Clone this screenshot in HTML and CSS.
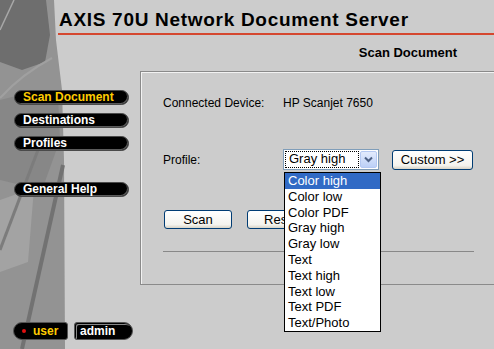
FILE: index.html
```html
<!DOCTYPE html>
<html lang="en">
<head>
    <meta charset="UTF-8">
    <title>AXIS 70U - Scan Document</title>
    <link rel="stylesheet" href="styles.css">
</head>
<body>
    <div class="page">
        <header class="masthead">
            <h1 class="title">AXIS 70U Network Document Server</h1>
            <div class="page-name">Scan Document</div>
        </header>

        <div class="layout">
            <nav class="sidebar">
                <ul class="menu">
                    <li><a class="menu-item active" href="#">Scan Document</a></li>
                    <li><a class="menu-item" href="#">Destinations</a></li>
                    <li><a class="menu-item" href="#">Profiles</a></li>
                </ul>
                <ul class="menu menu-help">
                    <li><a class="menu-item" href="#">General Help</a></li>
                </ul>
                <div class="modes">
                    <a class="mode mode-user" href="#"><span class="dot"></span>user</a>
                    <a class="mode mode-admin" href="#">admin</a>
                </div>
            </nav>

            <main class="panel">
                <div class="row device-row">
                    <span class="label">Connected Device:</span>
                    <span class="value">HP Scanjet 7650</span>
                </div>

                <div class="row profile-row">
                    <span class="label">Profile:</span>
                    <div class="select">
                        <span class="select-value">Gray high</span>
                        <span class="select-arrow">
                            <svg width="9" height="7" viewBox="0 0 9 7"><path d="M1 1.5 L4.5 5 L8 1.5" stroke="#4d6185" stroke-width="2" fill="none"/></svg>
                        </span>
                        <ul class="select-options">
                            <li class="selected">Color high</li>
                            <li>Color low</li>
                            <li>Color PDF</li>
                            <li>Gray high</li>
                            <li>Gray low</li>
                            <li>Text</li>
                            <li>Text high</li>
                            <li>Text low</li>
                            <li>Text PDF</li>
                            <li>Text/Photo</li>
                        </ul>
                    </div>
                    <button class="button custom-button">Custom &gt;&gt;</button>
                </div>

                <div class="row action-row">
                    <button class="button">Scan</button>
                    <button class="button">Reset</button>
                </div>

                <hr class="divider">
            </main>
        </div>
    </div>
</body>
</html>
```

FILE: styles.css
```css
html {
    overflow: hidden;
}
body {
    margin: 0;
    background-color: #cccccc;
    font-family: "Liberation Sans", Arial, sans-serif;
    color: #000;
}
.page {
    height: 349px;
    background-repeat: no-repeat;
    background-position: left top;
    background-image: url("data:image/svg+xml,%3Csvg xmlns='http://www.w3.org/2000/svg' width='66' height='349' viewBox='0 0 66 349'%3E%3Cpolygon points='0,0 54,0 56,40 62,90 64,160 65,349 0,349' fill='%23939393'/%3E%3Cpolygon points='0,0 46,0 50,35 45,62 22,70 0,62' fill='%236e6e6e'/%3E%3Cpolygon points='0,100 40,90 58,96 60,140 42,190 0,180' fill='%23878787'/%3E%3Cpolygon points='0,200 34,188 28,262 0,272' fill='%23a3a3a3'/%3E%3Cpath d='M14,0 L0,30' stroke='%23a8a8a8' stroke-width='1.5'/%3E%3Cpath d='M0,98 Q22,74 52,58' stroke='%23a0a0a0' stroke-width='2' fill='none'/%3E%3Cpath d='M63,165 L22,349' stroke='%23727272' stroke-width='4'/%3E%3Cpath d='M38,150 L0,250' stroke='%237c7c7c' stroke-width='3'/%3E%3C/svg%3E");
}

/* header */
.title {
    margin: 0 0 0 58px;
    padding: 9px 0 2px 1px;
    font-size: 19px;
    line-height: 22px;
    letter-spacing: 0.7px;
    font-weight: bold;
    white-space: nowrap;
    border-bottom: 2px solid #d5472f;
}
.page-name {
    margin-top: 10px;
    padding-right: 37px;
    text-align: right;
    font-size: 13px;
    line-height: 16px;
    font-weight: bold;
}

.layout {
    display: grid;
    grid-template-columns: 140px 357px;
    align-items: start;
    margin-top: 10px;
}

/* left menu */
.sidebar {
    padding: 19px 0 0 14px;
}
.menu {
    list-style: none;
    margin: 0;
    padding: 0;
}
.menu-help {
    margin-top: 31px;
}
.menu-item {
    display: block;
    width: 115px;
    height: 15px;
    box-sizing: border-box;
    margin-bottom: 8px;
    padding-left: 8px;
    border: 1px solid #4a4a4a;
    border-radius: 8px;
    background-color: #000;
    box-shadow: inset -1px -1px 0 #5a5a5a;
    color: #fff;
    text-decoration: none;
    font-size: 12px;
    line-height: 13px;
    font-weight: bold;
}
.menu-item.active {
    color: #ffcc00;
}
.modes {
    display: flex;
    gap: 6px;
    margin: 125px 0 0 -1px;
}
.mode {
    display: flex;
    align-items: center;
    height: 18px;
    box-sizing: border-box;
    border: 1px solid #555;
    background-color: #000;
    text-decoration: none;
    font-size: 12px;
    font-weight: bold;
}
.mode-user {
    width: 55px;
    padding-left: 8px;
    border-radius: 9px 3px 3px 9px;
    color: #ffcc00;
}
.mode-user .dot {
    width: 4px;
    height: 4px;
    margin-right: 7px;
    border-radius: 50%;
    background-color: #e01010;
}
.mode-admin {
    width: 59px;
    padding-left: 5px;
    border-radius: 3px 9px 9px 3px;
    color: #fff;
    box-shadow: inset 1px 1px 0 #000, inset 2px 2px 0 #888;
}

/* content panel */
.panel {
    padding: 23px 22px 32px 22px;
    border: 1px solid #8a8a8a;
    box-shadow: inset 1px 1px 0 #f2f2f2;
    font-size: 12px;
}
.row {
    display: flex;
    align-items: center;
}
.label {
    width: 120px;
    flex-shrink: 0;
}
.device-row {
    line-height: 16px;
}
.profile-row {
    margin-top: 38px;
}
.action-row {
    margin-top: 40px;
    gap: 15px;
    padding-left: 1px;
}

.button {
    height: 19px;
    width: 68px;
    padding: 0;
    border: 1px solid #003c74;
    border-radius: 3px;
    background: linear-gradient(#ffffff, #f4f3ee 80%, #d8d3c6);
    font-family: "Liberation Sans", Arial, sans-serif;
    font-size: 13px;
    color: #000;
}
.custom-button {
    width: 81px;
    height: 20px;
    margin-left: 13px;
}

/* profile dropdown, shown open */
.select {
    position: relative;
    display: flex;
    align-items: center;
    width: 96px;
    height: 21px;
    box-sizing: border-box;
    padding: 1px;
    border: 1px solid #7f9db9;
    background-color: #fff;
    font-size: 13px;
}
.select-value {
    flex: 1;
    height: 17px;
    box-sizing: border-box;
    padding-left: 4px;
    margin-right: 1px;
    line-height: 16px;
    outline: 1px dotted #000;
    outline-offset: -1px;
}
.select-arrow {
    display: flex;
    align-items: center;
    justify-content: center;
    width: 17px;
    height: 17px;
    box-sizing: border-box;
    border: 1px solid #b4c8f2;
    border-radius: 2px;
    background: linear-gradient(#e3ebfd, #bcd0f7);
}
.select-options {
    position: absolute;
    left: 0;
    top: 22px;
    z-index: 2;
    width: 97px;
    margin: 0;
    padding: 0;
    list-style: none;
    box-sizing: border-box;
    border: 1px solid #000;
    background-color: #fff;
}
.select-options li {
    padding-left: 3px;
    line-height: 15.8px;
}
.select-options .selected {
    background-color: #316ac5;
    color: #fff;
}

.divider {
    margin: 22px 0 0 0;
    height: 0;
    border: 0;
    border-top: 1px solid #888;
}
```
